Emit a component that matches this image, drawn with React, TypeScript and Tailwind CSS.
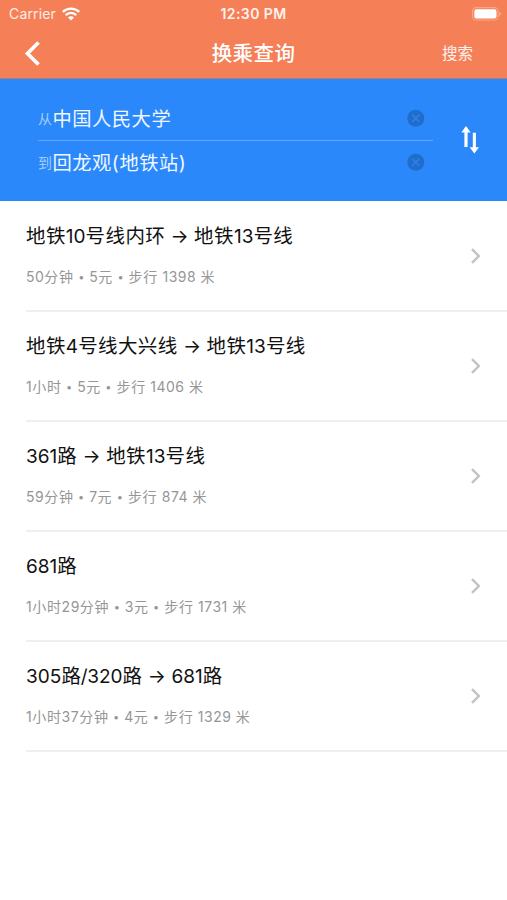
const routes = [
  { title: '地铁10号线内环 → 地铁13号线', detail: '50分钟 • 5元 • 步行 1398 米' },
  { title: '地铁4号线大兴线 → 地铁13号线', detail: '1小时 • 5元 • 步行 1406 米' },
  { title: '361路 → 地铁13号线', detail: '59分钟 • 7元 • 步行 874 米' },
  { title: '681路', detail: '1小时29分钟 • 3元 • 步行 1731 米' },
  { title: '305路/320路 → 681路', detail: '1小时37分钟 • 4元 • 步行 1329 米' },
];

function WifiIcon() {
  return (
    <svg width="18" height="14" viewBox="0 0 18 14" fill="none" stroke="white" strokeWidth="2.4">
      <path d="M0.8 4.9C5.4 .5 12.6 .5 17.2 4.9" />
      <path d="M3.7 8.1C6.8 5.2 11.2 5.2 14.3 8.1" />
      <path d="M6 10.6C7.8 8.9 10.2 8.9 12 10.6L9 13.6Z" fill="white" stroke="none" />
    </svg>
  );
}

function BatteryIcon() {
  return (
    <svg width="30" height="14" viewBox="0 0 30 14">
      <rect x="0.6" y="0.6" width="25.5" height="12.4" rx="3.6" fill="none" stroke="white" strokeOpacity=".3" strokeWidth="1.1" />
      <rect x="2.3" y="2.2" width="22.2" height="9.2" rx="2.2" fill="white" />
      <path d="M27.2 4.7C29.6 5.4 29.6 8.2 27.2 8.9Z" fill="white" fillOpacity=".3" />
    </svg>
  );
}

function ClearIcon() {
  return (
    <svg width="18" height="18" viewBox="0 0 18 18">
      <circle cx="8.8" cy="9.3" r="8.5" fill="#206dcc" />
      <path d="M5.1 5.6L12.5 13M12.5 5.6L5.1 13" stroke="#2b82ec" strokeWidth="1.6" />
    </svg>
  );
}

function SwapIcon() {
  return (
    <svg width="18" height="28" viewBox="0 0 18 28" fill="white">
      <path d="M5 0L9.7 6.6H6.6V21H3.4V6.6H.3Z" />
      <path d="M13.3 27.6L8.7 21.2H11.8V6.8H14.9V21.2H18Z" />
    </svg>
  );
}

function Field({ label, value }: { label: string; value: string }) {
  return (
    <div className="flex h-[44px] items-center pr-[8px]">
      <span className="w-[14.5px] pt-[2px] text-[14px] leading-5 text-[#a5cdff]">{label}</span>
      <span className="flex-1 pt-px text-[19.3px] leading-6 tracking-[0.5px] text-[#f0f7ff]">{value}</span>
      <ClearIcon />
    </div>
  );
}

/* Sets Han runs, slashes and bullets with their own size and spacing. */
function MixedText({ text, han }: { text: string; han: string }) {
  return (
    <>
      {text.split(/([\u4e00-\u9fff]+|•|\/)/).map((run, i) => {
        if (/^[\u4e00-\u9fff]/.test(run)) return <span key={i} className={han}>{run}</span>;
        if (run === '•') return <span key={i} className="align-[1px] text-[11px] leading-none">•</span>;
        if (run === '/') return <span key={i} className="-mx-[0.5px]">/</span>;
        return run;
      })}
    </>
  );
}

export default function App() {
  return (
    <div className="h-[900px] w-[507px] overflow-hidden bg-white font-['Inter','Noto_Sans_CJK_SC',sans-serif]">
      <header className="h-[79px] border-b border-[#b17c79] bg-[#f58058] text-white">
        <div className="grid h-[27px] grid-cols-3 items-center">
          <div className="flex items-center gap-[6px] pl-[9px] text-[14px] text-white/85">
            <span className="tracking-[0.15px]">Carrier</span>
            <WifiIcon />
          </div>
          <span className="text-center text-[14px] leading-5 font-semibold tracking-[0.4px] text-white/90">12:30 PM</span>
          <div className="flex justify-end pr-[5px]"><BatteryIcon /></div>
        </div>
        <div className="grid h-[51px] grid-cols-3 items-center">
          <svg className="mt-px ml-[24px]" width="17" height="25" viewBox="0 0 17 25" fill="none" stroke="white" strokeWidth="3.7">
            <path d="M14.5 1.5L3.5 12.5L14.5 23.5" />
          </svg>
          <h1 className="pt-[2px] text-center text-[20.5px] leading-7 font-medium tracking-[0.4px]">换乘查询</h1>
          <span className="pt-[2px] pr-[34px] text-right text-[15.5px] text-white/90">搜索</span>
        </div>
      </header>
      <section className="flex h-[122px] items-center bg-[#2a88fb] pl-[38px]">
        <div className="w-[395px]">
          <Field label="从" value="中国人民大学" />
          <div className="-mb-px h-px bg-[#60a7ff]" />
          <Field label="到" value="回龙观(地铁站)" />
        </div>
        <div className="ml-[28px]"><SwapIcon /></div>
      </section>
      <ul className="pt-px">
        {routes.map((route) => (
          <li key={route.title} className="ml-[26px] flex h-[110px] items-center justify-between border-b-2 border-[#efefef] pr-[26px]">
            <div>
              <div className="text-[19px] leading-[26px] tracking-[0.03px] whitespace-nowrap text-[#111]">
                <MixedText text={route.title} han="text-[19.5px] tracking-[0.4px]" />
              </div>
              <div className="mt-[17px] mb-[2px] text-[14px] leading-5 tracking-[0.5px] whitespace-nowrap text-[#969696]">
                <MixedText text={route.detail} han="tracking-[0.7px]" />
              </div>
            </div>
            <svg width="11" height="16" viewBox="0 0 11 16" fill="none" stroke="#c2c2c4" strokeWidth="2.4">
              <path d="M2 1.2L8.8 8L2 14.8" />
            </svg>
          </li>
        ))}
      </ul>
    </div>
  );
}
